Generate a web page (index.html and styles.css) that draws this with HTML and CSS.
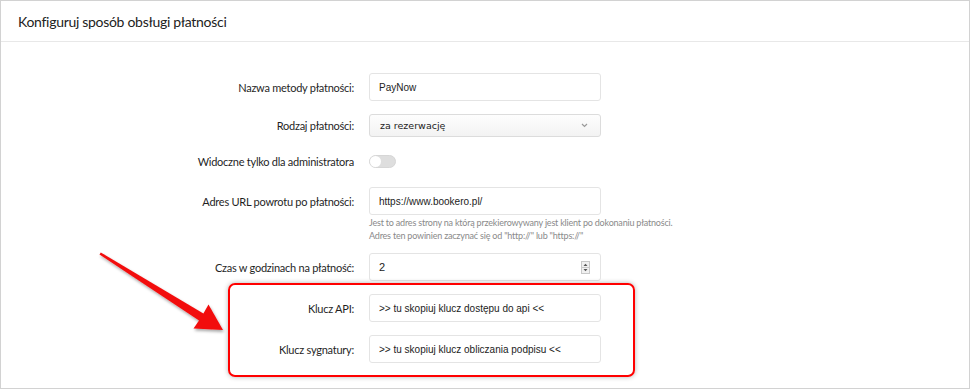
FILE: index.html
```html
<!DOCTYPE html>
<html lang="pl">
<head>
    <meta charset="UTF-8">
    <title>Konfiguruj sposób obsługi płatności</title>
    <link rel="stylesheet" href="styles.css">
</head>
<body>
    <div class="panel">
        <div class="panel-header">
            <div class="panel-title">Konfiguruj sposób obsługi płatności</div>
        </div>
        <div class="panel-body">
            <form class="settings">
                <div class="field">
                    <label class="field-label" for="name">Nazwa metody płatności:</label>
                    <div class="field-control">
                        <input class="text-input" id="name" type="text" value="PayNow">
                    </div>
                </div>
                <div class="field field-small">
                    <label class="field-label" for="kind">Rodzaj płatności:</label>
                    <div class="field-control">
                        <div class="select" id="kind">
                            <span>za rezerwację</span>
                            <svg class="select-arrow" width="7" height="5" viewBox="0 0 7 5"><path d="M1 1l2.5 2.5L6 1" fill="none" stroke="#9a9a9a" stroke-width="1.2"/></svg>
                        </div>
                    </div>
                </div>
                <div class="field field-small">
                    <label class="field-label">Widoczne tylko dla administratora</label>
                    <div class="field-control toggle-wrap">
                        <span class="toggle"><span class="toggle-knob"></span></span>
                    </div>
                </div>
                <div class="field">
                    <label class="field-label" for="url">Adres URL powrotu po płatności:</label>
                    <div class="field-control">
                        <input class="text-input" id="url" type="text" value="https://www.bookero.pl/">
                        <div class="help">Jest to adres strony na którą przekierowywany jest klient po dokonaniu płatności.<br>Adres ten powinien zaczynać się od "http://" lub "https://"</div>
                    </div>
                </div>
                <div class="field">
                    <label class="field-label" for="hours">Czas w godzinach na płatność:</label>
                    <div class="field-control">
                        <div class="number-input">
                            <span>2</span>
                            <span class="spinner">
                                <svg width="9" height="13" viewBox="0 0 9 13"><rect x="0.5" y="0.5" width="8" height="12" fill="#f0f0f0" stroke="#c8c8c8"/><line x1="1" y1="6.5" x2="8" y2="6.5" stroke="#c8c8c8"/><path d="M2.5 5L4.5 2.8 6.5 5z" fill="#555"/><path d="M2.5 8L4.5 10.2 6.5 8z" fill="#555"/></svg>
                            </span>
                        </div>
                    </div>
                </div>
                <div class="field">
                    <label class="field-label" for="api">Klucz API:</label>
                    <div class="field-control">
                        <input class="text-input" id="api" type="text" value=">> tu skopiuj klucz dostępu do api <<">
                    </div>
                </div>
                <div class="field">
                    <label class="field-label" for="sign">Klucz sygnatury:</label>
                    <div class="field-control">
                        <input class="text-input" id="sign" type="text" value=">> tu skopiuj klucz obliczania podpisu <<">
                    </div>
                </div>
            </form>

            <!-- annotation on top of the form -->
            <div class="highlight-box"></div>
            <svg class="arrow" width="970" height="390" viewBox="0 0 970 390">
                <defs>
                    <filter id="arrow-shadow" x="-20%" y="-20%" width="140%" height="140%">
                        <feDropShadow dx="1" dy="2" stdDeviation="1.5" flood-color="#000" flood-opacity="0.35"/>
                    </filter>
                </defs>
                <polygon points="99.5,254.5 100.8,252.4 203.4,313.4 208.5,304.5 223,330 193.5,328.5 199,320.5" fill="#f21010" filter="url(#arrow-shadow)"/>
            </svg>
        </div>
    </div>
</body>
</html>
```

FILE: styles.css
```css
* {
    box-sizing: border-box;
    margin: 0;
    padding: 0;
}
body {
    background: #fff;
    font-family: Lato, "Noto Sans", sans-serif;
    color: #333;
}
.panel {
    width: 970px;
    height: 389px;
    border: 1px solid #d2d2d2;
    position: relative;
}
.panel-header {
    height: 41px;
    border-bottom: 1px solid #e8e8e8;
    display: flex;
    align-items: center;
    padding-left: 17px;
}
.panel-title {
    font-size: 14px;
    letter-spacing: -0.3px;
    color: #222;
}
.panel-body {
    padding-top: 31px;
}
.settings {
    display: flex;
    flex-direction: column;
    gap: 13px;
}
.field {
    display: grid;
    grid-template-columns: 353px 232px;
    column-gap: 15px;
}
.field-label {
    height: 28px;
    display: flex;
    align-items: center;
    justify-content: flex-end;
    font-size: 11px;
    letter-spacing: -0.25px;
    color: #1f1f1f;
}
.field-small .field-label {
    height: 23px;
}
.text-input {
    width: 100%;
    height: 28px;
    border: 1px solid #e4e4e4;
    border-radius: 3px;
    padding: 0 9px;
    font-family: "Liberation Sans", Arial, sans-serif;
    font-size: 10px;
    color: #222;
    background: #fff;
    outline: none;
}
.select {
    height: 23px;
    border: 1px solid #dcdcdc;
    border-radius: 3px;
    background: linear-gradient(#fdfdfd, #f3f3f3);
    display: flex;
    align-items: center;
    justify-content: space-between;
    padding: 0 12px 0 10px;
    font-family: "DejaVu Sans", sans-serif;
    font-size: 9.5px;
    color: #222;
}
.toggle-wrap {
    display: flex;
    align-items: center;
}
.toggle {
    width: 27px;
    height: 13px;
    border-radius: 7px;
    background: #dedede;
    border: 1px solid #d6d6d6;
    position: relative;
}
.toggle-knob {
    position: absolute;
    left: 0;
    top: 0;
    width: 11px;
    height: 11px;
    border-radius: 50%;
    background: #fff;
}
.field:nth-child(4) {
    margin-top: 1px;
}
.help {
    margin: 2px 0 -2px;
    font-size: 9px;
    letter-spacing: -0.2px;
    line-height: 12.5px;
    color: #8a8a8a;
    white-space: nowrap;
}
.number-input {
    height: 28px;
    border: 1px solid #e4e4e4;
    border-radius: 3px;
    padding: 0 10px 0 9px;
    display: flex;
    align-items: center;
    justify-content: space-between;
    font-family: "Liberation Sans", Arial, sans-serif;
    font-size: 11px;
    color: #222;
}
.spinner {
    display: flex;
}
.highlight-box {
    position: absolute;
    left: 227px;
    top: 282px;
    width: 407px;
    height: 94px;
    border: 2px solid #f00;
    border-radius: 7px;
    box-shadow: 0 0 5px rgba(0, 0, 0, 0.3);
}
.arrow {
    position: absolute;
    left: -1px;
    top: -1px;
    pointer-events: none;
}
```
